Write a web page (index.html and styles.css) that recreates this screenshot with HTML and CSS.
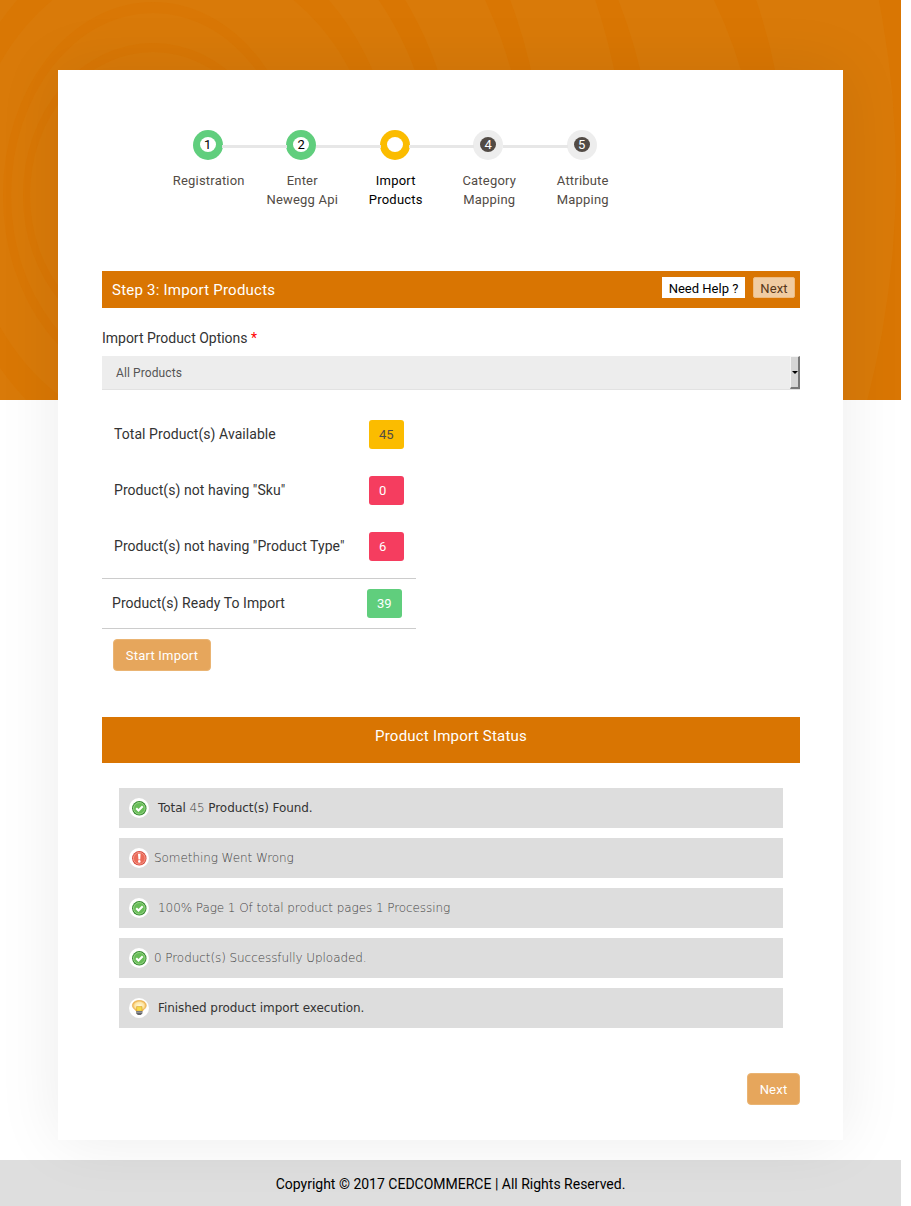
FILE: index.html
```html
<!DOCTYPE html>
<html lang="en">
<head>
<meta charset="utf-8">
<title>Import Products</title>
<link rel="stylesheet" href="styles.css">
</head>
<body>
<svg class="backdrop" width="901" height="400" viewBox="0 0 901 400" aria-hidden="true">
  <rect width="901" height="400" fill="#d97603"/>
  <ellipse cx="175" cy="175" rx="721" ry="806" fill="#d97a09"/>
  <ellipse cx="175" cy="195" rx="613" ry="613" fill="#d97603"/>
  <ellipse cx="175" cy="195" rx="584" ry="506" fill="#d97a09"/>
  <ellipse cx="175" cy="195" rx="480" ry="508" fill="#d97603"/>
  <ellipse cx="175" cy="195" rx="452" ry="530" fill="#d97a09"/>
  <ellipse cx="175" cy="195" rx="370" ry="460" fill="#d97603"/>
  <ellipse cx="175" cy="195" rx="353" ry="408" fill="#d97a09"/>
  <ellipse cx="175" cy="195" rx="283" ry="335" fill="#d97603"/>
  <ellipse cx="175" cy="195" rx="262" ry="310" fill="#d97a09"/>
  <ellipse cx="173" cy="195" rx="225" ry="270" fill="#d97704"/>
  <ellipse cx="173" cy="195" rx="207" ry="240" fill="#d97a09"/>
  <ellipse cx="153" cy="195" rx="150" ry="193" fill="#d97705"/>
  <ellipse cx="153" cy="195" rx="142" ry="182" fill="#d97a09"/>
  <ellipse cx="153" cy="195" rx="130" ry="152" fill="#d97705"/>
  <ellipse cx="153" cy="195" rx="123" ry="143" fill="#d97a09"/>
</svg>
<div class="page">
  <main class="card">
    <ol class="steps">
      <li class="step done"><span class="dot"><b>1</b></span><span>Registration</span></li>
      <li class="step done"><span class="dot"><b>2</b></span><span>Enter<br>Newegg Api</span></li>
      <li class="step active"><span class="dot"><b></b></span><span>Import<br>Products</span></li>
      <li class="step"><span class="dot"><b>4</b></span><span>Category<br>Mapping</span></li>
      <li class="step"><span class="dot"><b>5</b></span><span>Attribute<br>Mapping</span></li>
    </ol>

    <header class="bar">
      <h1>Step 3: Import Products</h1>
      <div class="bar-actions"><a class="help">Need Help ?</a><a class="small-next">Next</a></div>
    </header>

    <div class="label">Import Product Options <span class="req">*</span></div>
    <div class="select"><span>All Products</span><i class="arrow"></i></div>

    <section class="counts">
      <div class="count"><span>Total Product(s) Available</span><em class="yellow">45</em></div>
      <div class="count"><span>Product(s) not having "Sku"</span><em class="red">0</em></div>
      <div class="count"><span>Product(s) not having "Product Type"</span><em class="red">6</em></div>
      <div class="count ready"><span>Product(s) Ready To Import</span><em class="green">39</em></div>
    </section>
    <button class="btn start">Start Import</button>

    <h2 class="status-title">Product Import Status</h2>
    <ul class="log">
      <li class="dark"><svg class="icon" viewBox="0 0 20 20"><use href="#ok"/></svg><span class="indent">Total <span class="num">45</span> Product(s) Found.</span></li>
      <li><svg class="icon" viewBox="0 0 20 20"><circle cx="10" cy="10" r="10" fill="#fff"/><circle cx="10.3" cy="10.3" r="7.2" fill="#d5493b"/><circle cx="10.3" cy="10.3" r="5.9" fill="#ec6b59" stroke="#f9ada2" stroke-width=".8"/><path d="M9 5.8h2.6l-.4 5.6H9.4z" fill="#fff"/><circle cx="10.3" cy="13.4" r="1.3" fill="#fff"/></svg><span>Something Went Wrong</span></li>
      <li><svg class="icon" viewBox="0 0 20 20"><use href="#ok"/></svg><span class="indent">100% Page 1 Of total product pages 1 Processing</span></li>
      <li><svg class="icon" viewBox="0 0 20 20"><use href="#ok"/></svg><span>0 Product(s) Successfully Uploaded.</span></li>
      <li class="dark"><svg class="icon" viewBox="0 0 20 20"><defs><radialGradient id="bulb"><stop offset="0" stop-color="#fff8dd"/><stop offset=".65" stop-color="#fde6a6"/><stop offset="1" stop-color="#efae45"/></radialGradient></defs><circle cx="10" cy="10" r="10" fill="#fff"/><path d="M3.4 7.5C3.4 4.4 6.5 2.5 10.3 2.5s7 1.9 7 5c0 2.3-1.8 3.5-3.8 5.4H7.2C5.2 11 3.4 9.8 3.4 7.5z" fill="url(#bulb)" stroke="#e3ab4c" stroke-width=".6"/><path d="M7.6 8.6h5.4v4.6H7.6z" fill="#f5dc4a" stroke="#d69a27" stroke-width=".6"/><path d="M7.2 13h6.2v2.5l-1.7 1.5H8.9l-1.7-1.5z" fill="#65666a"/><path d="M7.4 14.2h5.9" stroke="#bbb" stroke-width=".8"/></svg><span class="indent">Finished product import execution.</span></li>
    </ul>
    <button class="btn next">Next</button>
  </main>
  <footer class="footer"><span>Copyright © 2017 CEDCOMMERCE | All Rights Reserved.</span></footer>
</div>
<svg width="0" height="0" class="symbols"><symbol id="ok" viewBox="0 0 20 20"><circle cx="10" cy="10" r="10" fill="#fff"/><circle cx="10.3" cy="10.3" r="7.2" fill="#35892f"/><circle cx="10.3" cy="10.3" r="5.8" fill="#68bd58" stroke="#a5dc94" stroke-width=".9"/><path d="M7.2 10.2l2.3 2.3 4.2-4.2" fill="none" stroke="#fff" stroke-width="2.1"/></symbol></svg>
</body>
</html>
```
FILE: styles.css
```css
* { box-sizing: border-box; }
html, body { margin: 0; padding: 0; background: #fff; }
body { font-family: Roboto, "Liberation Sans", sans-serif; color: #333; position: relative; width: 911px; height: 1206px; overflow: hidden; }
.backdrop { position: absolute; left: 0; top: 0; display: block; }
.symbols { position: absolute; }
.page { position: relative; width: 901px; height: 1206px; padding-top: 70px; overflow: hidden; display: flex; flex-direction: column; }
.card { width: 785px; height: 1070px; margin-left: 58px; flex: none; background: #fff; padding: 60px 43px 0 44px; box-shadow: 0 0 60px rgba(0,0,0,.08); }

.steps { list-style: none; margin: 0 0 0 59px; padding: 0; height: 141px; display: flex; }
.step { width: 93.5px; text-align: center; font-size: 13px; line-height: 19px; letter-spacing: .2px; color: #524b45; display: flex; flex-direction: column; align-items: center; gap: 11px; position: relative; }
.step > span:last-child { margin-left: 2px; white-space: nowrap; }
.step + .step::before { content: ""; position: absolute; right: 61px; top: 15px; width: 65px; height: 3px; background: #e7e7e7; }
.dot { width: 30px; height: 30px; border-radius: 50%; background: #ededed; display: flex; align-items: center; justify-content: center; flex: none; }
.dot b { width: 16px; height: 15px; margin-top: -1px; border-radius: 50%; background: #524b45; color: #fff; font-weight: 400; font-size: 13px; line-height: 16px; letter-spacing: 0; }
.done .dot { background: #60ce7d; }
.active .dot { background: #fbbc00; }
.done b, .active b { background: #fff; color: #000; }
.active { color: #000; }

.bar { height: 37px; background: #d97502; display: flex; justify-content: space-between; padding: 6px 5px 0 10px; }
.bar h1 { margin: 3px 0 0; font-size: 15px; line-height: 20px; font-weight: 400; letter-spacing: .22px; color: #fff; }
.bar-actions { display: flex; gap: 8px; font-size: 13px; line-height: 23px; text-align: center; white-space: nowrap; }
.help { width: 83px; height: 21px; background: #fff; color: #000; }
.small-next { width: 42px; height: 21px; background: #f0cca2; color: #573719; letter-spacing: .2px; border: 1px solid #eebb80; border-radius: 2px; line-height: 21px; }

.label { margin-top: 20px; font-size: 14px; line-height: 20px; height: 28px; letter-spacing: -.02px; }
.req { color: #f00; }
.select { height: 34px; background: #ededed; border-bottom: 1px solid #e2e2e2; display: flex; align-items: center; justify-content: space-between; padding-left: 14px; font-size: 12px; letter-spacing: .1px; color: #555; }
.select span { padding-top: 1px; }
.arrow { width: 10px; height: 33px; background: #d5d5d5; border: 1px solid #f4f4f4; border-right: 2px solid #777; border-bottom: 2px solid #777; display: flex; align-items: center; justify-content: center; }
.arrow::after { content: ""; border: 3px solid transparent; border-top: 3px solid #000; border-bottom: 0; }

.counts { width: 314px; padding-top: 16px; }
.count { height: 56px; padding: 0 12px; display: flex; justify-content: space-between; align-items: center; font-size: 14px; letter-spacing: .06px; }
.count em { width: 35px; height: 29px; padding-left: 10px; border-radius: 3px; font-style: normal; font-size: 13px; line-height: 30px; color: #fff; }
.count .yellow { background: #fbbc00; color: #524b45; }
.count .red { background: #f53d5f; }
.count .green { background: #60ce7d; }
.ready { height: 51px; margin-top: 4px; padding: 0 14px 0 10px; border-top: 1px solid #ccc; border-bottom: 1px solid #ccc; }
.ready span { padding-bottom: 2px; }

.btn { display: block; height: 32px; padding: 0; border: 1px solid #eab473; border-radius: 4px; background: #e6a65c; color: #fff; font: 400 13px/31px Roboto, sans-serif; letter-spacing: .22px; }
.start { width: 98px; margin: 10px 0 0 11px; }
.next { width: 53px; margin: 45px 0 0 auto; }

.status-title { margin: 46px 0 25px; height: 46px; padding-top: 9px; background: #d97502; color: #fff; text-align: center; font-weight: 400; font-size: 15px; line-height: 20px; letter-spacing: .22px; }
.log { list-style: none; margin: 0 17px; padding: 0; display: flex; flex-direction: column; gap: 10px; }
.log li { height: 40px; padding-left: 10px; background: #ddd; display: flex; align-items: center; gap: 5px; font: 200 12px/20px "DejaVu Sans", sans-serif; letter-spacing: -.07px; color: #444; white-space: pre; }
.log li.dark { color: #333; font-weight: 400; }
.log .indent { padding-left: 4px; }
.log .num { color: #444; font-weight: 200; }
.icon { width: 20px; height: 20px; flex: none; }
.footer { flex: none; height: 46px; margin-top: 20px; display: flex; align-items: center; justify-content: center; background: rgba(0,0,0,.13); color: #000; font-size: 14px; padding-top: 2px; }
```
